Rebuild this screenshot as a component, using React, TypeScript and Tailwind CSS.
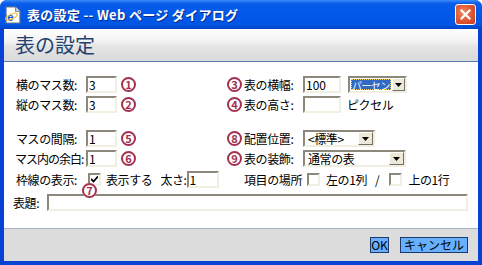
import React from "react";

const FONT = { fontFamily: '"MS UI Gothic", "Noto Sans CJK JP", sans-serif' };

function Num({ n }: { n: number }) {
  return (
    <span className="w-[15px] h-[15px] shrink-0 rounded-full border-2 border-[#a3314f] text-[#a3314f] text-[11px] font-bold leading-none flex items-center justify-center tracking-normal">
      {n}
    </span>
  );
}

function Input({ value = "", w }: { value?: string; w: number }) {
  return (
    <div
      className="h-[17px] bg-white border-2 border-t-[#8c887c] border-l-[#8c887c] border-b-[#f1efe2] border-r-[#f1efe2] text-[12px] leading-[13px] pl-[1px] shrink-0 tracking-normal"
      style={{ width: w }}
    >
      {value}
    </div>
  );
}

function Select({ value, w, focused }: { value: string; w: number; focused?: boolean }) {
  return (
    <div
      className="h-[17px] bg-white border-2 border-t-[#8c887c] border-l-[#8c887c] border-b-[#f1efe2] border-r-[#f1efe2] flex items-stretch shrink-0"
      style={{ width: w }}
    >
      <div className="flex-1 flex items-center p-[1px] min-w-0">
        {focused ? (
          <div className="w-full h-full bg-[#316ac5] text-white text-[10px] leading-[11px] border border-dotted border-[#e8d060] whitespace-nowrap tracking-[-0.6px]">
            {value}
          </div>
        ) : (
          <span className="text-[12px] leading-[12px] pl-[2px] whitespace-nowrap">{value}</span>
        )}
      </div>
      <div
        className={`${focused ? "w-[13px]" : "w-[15px]"} shrink-0 bg-[#ece9d8] border border-t-white border-l-white border-b-[#716f64] border-r-[#716f64] flex items-center justify-center`}
      >
        <svg width="7" height="4" viewBox="0 0 7 4">
          <path d="M0 0h7L3.5 4z" fill="#000" />
        </svg>
      </div>
    </div>
  );
}

function Check({ checked }: { checked?: boolean }) {
  return (
    <span className="w-[13px] h-[13px] bg-white border-2 border-t-[#8c887c] border-l-[#8c887c] border-b-[#f1efe2] border-r-[#f1efe2] flex items-center justify-center shrink-0">
      {checked && (
        <svg width="7" height="7" viewBox="0 0 7 7">
          <path d="M0 3l2.5 2.5L7 0.5" stroke="#000" strokeWidth="1.8" fill="none" />
        </svg>
      )}
    </span>
  );
}

export default function App() {
  return (
    <div
      className="w-[482px] h-[265px] bg-[#0842d4] flex flex-col rounded-t-[7px] overflow-hidden text-black"
      style={FONT}
    >
      {/* title bar */}
      <div className="h-[29px] shrink-0 flex items-center pl-[4px] pr-[6px] bg-[linear-gradient(to_bottom,#3d8cfb_0%,#0a5ce9_12%,#0058ea_50%,#0055e3_85%,#0044c4_100%)]">
        <svg width="18" height="18" viewBox="0 0 17 17" className="shrink-0">
          <path d="M2 1h9l4 4v11H2z" fill="#fff" stroke="#6a7a8e" />
          <path d="M11 1v4h4" fill="#dfe6ee" stroke="#6a7a8e" />
          <text x="3" y="14" fontSize="11" fontWeight="bold" fill="#1c5bd6" fontFamily="Liberation Sans, sans-serif">e</text>
          <ellipse cx="7" cy="10" rx="6" ry="2.2" fill="none" stroke="#f1b52a" strokeWidth="1" transform="rotate(-25 7 10)" />
        </svg>
        <span className="ml-[5px] text-white text-[13px] font-bold tracking-[0.3px] [text-shadow:1px_1px_0_#0a2a8a] whitespace-nowrap">
          表の設定 -- Web ページ ダイアログ
        </span>
        <div className="ml-auto w-[21px] h-[21px] rounded-[3px] border border-white bg-[radial-gradient(circle_at_40%_40%,#f08a64_0%,#e05530_55%,#c73c1c_100%)] flex items-center justify-center">
          <svg width="11" height="11" viewBox="0 0 11 11">
            <path d="M1.5 1.5l8 8M9.5 1.5l-8 8" stroke="#fff" strokeWidth="2.2" strokeLinecap="square" />
          </svg>
        </div>
      </div>

      <div className="flex-1 mx-[4px] mb-[4px] bg-white flex flex-col">
        {/* header */}
        <div className="h-[33px] shrink-0 border-b border-[#5d79ad] bg-[linear-gradient(to_bottom,#ffffff_0%,#f4f4f4_35%,#e4e4e4_55%,#dadada_100%)] flex items-center pl-[11px]">
          <span className="text-[20px] leading-none text-[#23406e]">表の設定</span>
        </div>

        {/* body */}
        <div className="flex-1 relative text-[12px] leading-none pt-[14px] whitespace-nowrap tracking-[-0.4px]">
          <div className="flex h-[17px]">
            <div className="w-[223px] flex items-center pl-[12px]">
              <span className="w-[70px]">横のマス数:</span>
              <Input value="3" w={31} />
              <span className="ml-[4px]"><Num n={1} /></span>
            </div>
            <div className="flex items-center">
              <Num n={3} />
              <span className="ml-[2px] w-[59px]">表の横幅:</span>
              <Input value="100" w={38} />
              <span className="ml-[7px]"><Select value="パーセン" w={59} focused /></span>
            </div>
          </div>

          <div className="flex h-[17px] mt-[3px]">
            <div className="w-[223px] flex items-center pl-[12px]">
              <span className="w-[70px]">縦のマス数:</span>
              <Input value="3" w={31} />
              <span className="ml-[4px]"><Num n={2} /></span>
            </div>
            <div className="flex items-center">
              <Num n={4} />
              <span className="ml-[2px] w-[59px]">表の高さ:</span>
              <Input w={38} />
              <span className="ml-[6px]">ピクセル</span>
            </div>
          </div>

          <div className="flex h-[17px] mt-[17px]">
            <div className="w-[223px] flex items-center pl-[12px]">
              <span className="w-[70px]">マスの間隔:</span>
              <Input value="1" w={31} />
              <span className="ml-[4px]"><Num n={5} /></span>
            </div>
            <div className="flex items-center">
              <Num n={8} />
              <span className="ml-[2px] w-[59px]">配置位置:</span>
              <Select value="<標準>" w={72} />
            </div>
          </div>

          <div className="flex h-[17px] mt-[3px]">
            <div className="w-[223px] flex items-center pl-[11px]">
              <span className="w-[71px] tracking-[-1px]">マス内の余白:</span>
              <Input value="1" w={31} />
              <span className="ml-[4px]"><Num n={6} /></span>
            </div>
            <div className="flex items-center">
              <Num n={9} />
              <span className="ml-[2px] w-[59px]">表の装飾:</span>
              <Select value="通常の表" w={103} />
            </div>
          </div>

          <div className="flex h-[17px] mt-[4px]">
            <div className="w-[223px] flex items-center pl-[12px]">
              <span className="w-[72px]">枠線の表示:</span>
              <Check checked />
              <span className="ml-[5px]">表示する</span>
              <span className="ml-[8px]">太さ:</span>
              <Input value="1" w={32} />
            </div>
            <div className="flex items-center pl-[17px]">
              <span>項目の場所</span>
              <span className="ml-[5px]"><Check /></span>
              <span className="ml-[6px]">左の1列</span>
              <span className="ml-[8px]">/</span>
              <span className="ml-[10px]"><Check /></span>
              <span className="ml-[6px]">上の1行</span>
            </div>
          </div>

          <div className="flex items-center h-[17px] mt-[6px] pl-[9px] pr-[10px]">
            <span className="w-[34px]">表題:</span>
            <div className="flex-1 h-[17px] bg-white border-2 border-t-[#8c887c] border-l-[#8c887c] border-b-[#f1efe2] border-r-[#f1efe2]" />
          </div>

          <div className="absolute left-[78px] top-[121px] bg-white rounded-full">
            <Num n={7} />
          </div>
        </div>

        {/* footer */}
        <div className="h-[33px] shrink-0 bg-[#dcdcdc] border-t border-[#a8b4c8] flex items-center justify-end pr-[10px] gap-[11px] text-[12px]">
          <div className="w-[19px] h-[16px] bg-[#66b0ff] border border-[#1c3a6c] flex items-center justify-center leading-none">OK</div>
          <div className="w-[68px] h-[16px] bg-[#66b0ff] border border-[#1c3a6c] flex items-center justify-center leading-none">キャンセル</div>
        </div>
      </div>
    </div>
  );
}
